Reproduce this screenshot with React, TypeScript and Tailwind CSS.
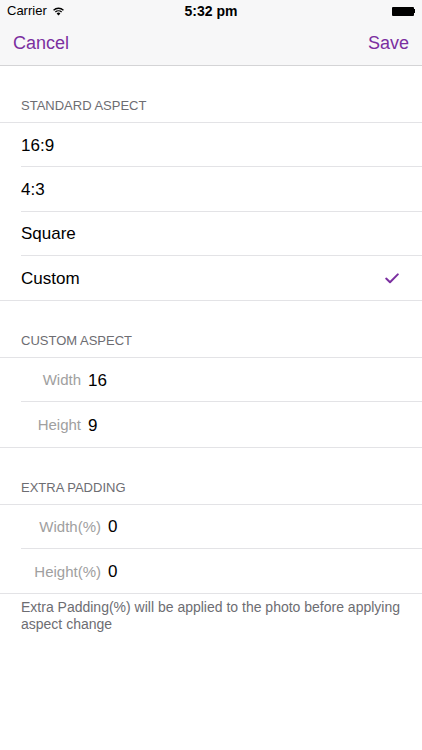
import * as React from "react"

const purple = "text-[#7b2fa0]"

function StatusBar() {
  return (
    <div className="relative flex h-[22px] items-center px-[7px] text-[13px] text-black">
      <div className="flex items-center gap-[5px]">
        <span>Carrier</span>
        <svg width="13" height="10" viewBox="0 0 13 10" fill="black">
          <path d="M6.5 9.5 L4.6 7.4 A2.7 2.7 0 0 1 8.4 7.4 Z" />
          <path d="M2.9 5.6 A5.2 5.2 0 0 1 10.1 5.6 L9.2 6.6 A3.9 3.9 0 0 0 3.8 6.6 Z" />
          <path d="M1.1 3.7 A7.8 7.8 0 0 1 11.9 3.7 L11 4.7 A6.5 6.5 0 0 0 2 4.7 Z" />
        </svg>
      </div>
      <span className="absolute left-1/2 -translate-x-1/2 text-[14px] font-bold">5:32 pm</span>
      <div className="ml-auto flex items-center">
        <div className="h-[9px] w-[22px] rounded-[1px] bg-black" />
        <div className="h-[4px] w-[1.5px] bg-black" />
      </div>
    </div>
  )
}

function SectionHeader({ title }: { title: string }) {
  return (
    <div className="px-[21px] pt-[32px] pb-[8px] text-[13px] leading-[16px] text-[#6d6d72]">
      {title}
    </div>
  )
}

function Row({ children, last }: { children: React.ReactNode; last?: boolean }) {
  return (
    <div className={last ? "border-b border-[#e3e3e6]" : "pl-[21px]"}>
      <div
        className={
          "flex h-[44.25px] items-center pt-[2px] text-[17px] text-black " +
          (last ? "pl-[21px] pr-[21px]" : "border-b border-[#e3e3e6] pr-[21px]")
        }
      >
        {children}
      </div>
    </div>
  )
}

function FieldRow({ label, value, labelWidth, last }: { label: string; value: string; labelWidth: string; last?: boolean }) {
  return (
    <Row last={last}>
      <span className={"text-right text-[15px] text-[#a0a0a0] " + labelWidth}>{label}</span>
      <span className="ml-[7px]">{value}</span>
    </Row>
  )
}

export default function App() {
  return (
    <div className="min-h-[750px] w-full bg-white font-['Liberation_Sans',Arial,sans-serif]">
      <div className="border-b border-[#d4d4d6] bg-[#f7f7f8]">
        <StatusBar />
        <div className={"flex h-[43px] items-center justify-between px-[13px] text-[18px] " + purple}>
          <span>Cancel</span>
          <span>Save</span>
        </div>
      </div>

      <SectionHeader title="STANDARD ASPECT" />
      <div className="border-t border-[#e3e3e6]">
        <Row>16:9</Row>
        <Row>4:3</Row>
        <Row>Square</Row>
        <Row last>
          <span>Custom</span>
          <svg className="ml-auto mr-[2px]" width="14" height="11" viewBox="0 0 14 11" fill="none">
            <path d="M1.2 5.6 L5 9.2 L12.8 1.4" stroke="#7b2fa0" strokeWidth="2" strokeLinecap="round" strokeLinejoin="round" />
          </svg>
        </Row>
      </div>

      <SectionHeader title="CUSTOM ASPECT" />
      <div className="border-t border-[#e3e3e6]">
        <FieldRow label="Width" value="16" labelWidth="w-[60px]" />
        <FieldRow label="Height" value="9" labelWidth="w-[60px]" last />
      </div>

      <SectionHeader title="EXTRA PADDING" />
      <div className="border-t border-[#e3e3e6]">
        <FieldRow label="Width(%)" value="0" labelWidth="w-[80px]" />
        <FieldRow label="Height(%)" value="0" labelWidth="w-[80px]" last />
      </div>

      <p className="px-[21px] pt-[5px] text-[14px] leading-[17px] text-[#6d6d72]">
        Extra Padding(%) will be applied to the photo before applying aspect change
      </p>
    </div>
  )
}
